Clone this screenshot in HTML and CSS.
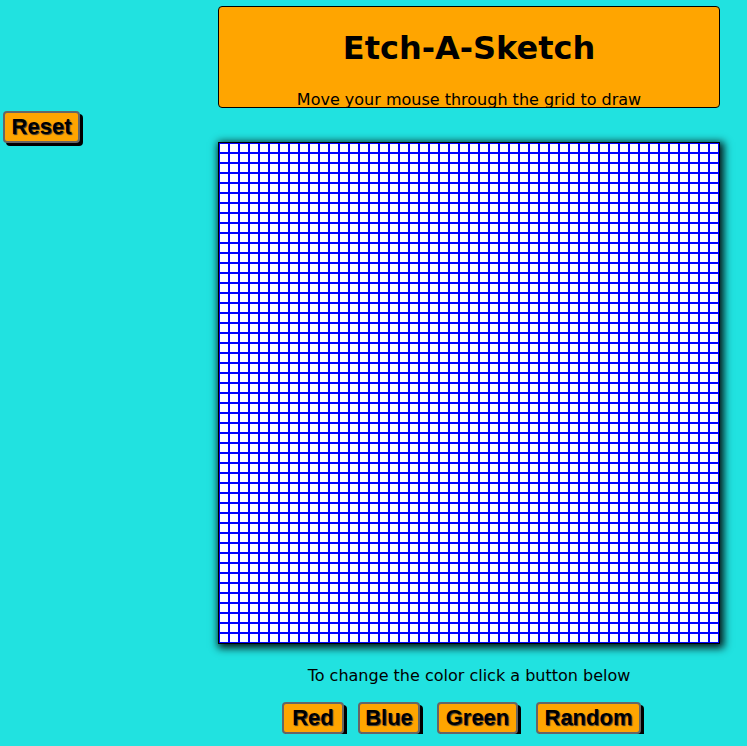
FILE: index.html
```html
<!DOCTYPE html>
<html>
<head>
<meta charset="utf-8">
<title>Etch-A-Sketch</title>
<link rel="stylesheet" href="styles.css">
</head>
<body>
<div class="page">
  <header class="title-box">
    <h1 class="title">Etch-A-Sketch</h1>
    <p class="subtitle">Move your mouse through the grid to draw</p>
  </header>
  <div class="row">
    <div class="side">
      <button class="btn" id="reset">Reset</button>
    </div>
    <main class="main">
      <div class="grid" id="grid"></div>
      <p class="hint">To change the color click a button below</p>
      <div class="colors">
        <button class="btn btn-red">Red</button>
        <button class="btn btn-blue">Blue</button>
        <button class="btn btn-green">Green</button>
        <button class="btn btn-random">Random</button>
      </div>
    </main>
  </div>
</div>
<script src="script.js"></script>
</body>
</html>
```

FILE: styles.css
```css
html, body {
  margin: 0;
  padding: 0;
  background: #21e2e0;
  font-family: "DejaVu Sans", Verdana, sans-serif;
  color: #000;
}
.page {
  padding-top: 6px;
}
.title-box {
  margin-left: 218px;
  width: 500px;
  height: 100px;
  background: #ffa500;
  border: 1px solid #000;
  border-radius: 4px;
  display: flex;
  flex-direction: column;
  align-items: center;
  justify-content: space-between;
  box-sizing: content-box;
}
.title {
  margin: 23px 0 0;
  font-size: 32px;
  font-weight: bold;
  line-height: 37px;
}
.subtitle {
  margin: 0 0 -2px;
  font-size: 16px;
  line-height: 18px;
}
.row {
  display: flex;
  align-items: flex-start;
}
.side {
  width: 218px;
  flex: none;
}
.btn {
  font-family: "Liberation Sans", Arial, sans-serif;
  font-weight: bold;
  font-size: 22px;
  line-height: 24px;
  color: #000;
  background: #ffa500;
  border: 2px solid #666;
  border-radius: 4px;
  padding: 2px 0;
  height: 32px;
  box-shadow: 3px 3px 0 #000;
  text-shadow: 1px 1px 1px #333;
  text-align: center;
  cursor: pointer;
}
#reset {
  margin: 3px 0 0 3px;
  width: 77px;
}
.main {
  display: flex;
  flex-direction: column;
  align-items: center;
  width: 502px;
}
.grid {
  margin-top: 34px;
  width: 500px;
  height: 500px;
  border: 1px solid #000;
  display: grid;
  grid-template-columns: repeat(50, 10px);
  grid-template-rows: repeat(50, 10px);
  background: #fff;
  box-shadow: 2px 2px 8px 2px rgba(0, 0, 0, 0.9);
}
.cell {
  box-sizing: border-box;
  border: 1px solid #0000ff;
  background: #fff;
}
.hint {
  margin: 23px 0 0;
  font-size: 16px;
  line-height: 18px;
}
.colors {
  display: flex;
  margin-top: 17px;
  padding-right: 15px;
}
.btn-red { width: 62px; margin-right: 14px; }
.btn-blue { width: 62px; margin-right: 17px; }
.btn-green { width: 81px; margin-right: 18px; }
.btn-random { width: 105px; }
```

FILE: script.js
```js
const grid = document.getElementById('grid');
const frag = document.createDocumentFragment();
for (let i = 0; i < 2500; i++) {
  const d = document.createElement('div');
  d.className = 'cell';
  frag.appendChild(d);
}
grid.appendChild(frag);
```
